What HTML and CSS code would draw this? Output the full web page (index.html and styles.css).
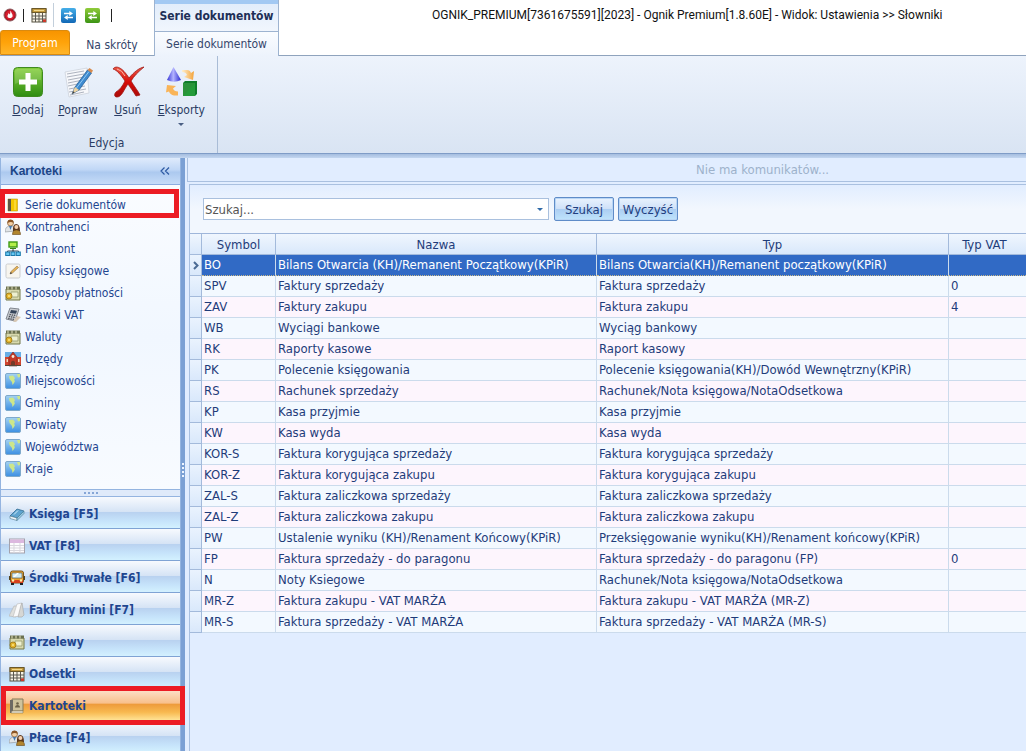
FILE: index.html
```html
<!DOCTYPE html>
<html lang="pl">
<head>
<meta charset="utf-8">
<title>OGNIK_PREMIUM</title>
<link rel="stylesheet" href="styles.css">
</head>
<body>
<svg class="defs" aria-hidden="true">
  <defs>
    <linearGradient id="g-green" x2="0" y2="1"><stop offset="0" stop-color="#86cf3c"/><stop offset="1" stop-color="#2f8d12"/></linearGradient>
    <linearGradient id="g-sky" x2="0" y2="1"><stop offset="0" stop-color="#a5d3f2"/><stop offset="1" stop-color="#3c8fe2"/></linearGradient>
    <linearGradient id="g-red" x2="0" y2="1"><stop offset="0" stop-color="#ec5a48"/><stop offset=".5" stop-color="#d80d08"/><stop offset="1" stop-color="#aa0a08"/></linearGradient>
    <linearGradient id="g-cone"><stop offset="0" stop-color="#3434d6"/><stop offset=".45" stop-color="#b4b4ff"/><stop offset="1" stop-color="#2828cf"/></linearGradient>
    <linearGradient id="g-orange"><stop offset="0" stop-color="#fff0cf"/><stop offset="1" stop-color="#f3a33a"/></linearGradient>
    <symbol id="i-flame" viewBox="0 0 16 16"><circle cx="8" cy="8" r="6" fill="#b4101e" stroke="#8a5a5e"/><circle cx="8" cy="8" r="4.6" fill="#d62030"/><path d="M8.500 3.600C9 6 11 7 10.600 9.300 10.300 11.600 6 11.700 5.500 9.400 5.300 8 6.500 7.500 6.300 6.300 7.500 6.600 7.600 7.400 7.700 7.600 8.600 6.400 8.200 4.600 8.500 3.600Z" fill="#fff"/></symbol>
    <symbol id="i-calendar" viewBox="0 0 16 16"><rect x="1" y="2" width="14" height="13" fill="#f8f4e6" stroke="#55503f"/><rect x="1" y="1.500" width="14" height="4" fill="#c39a3e" stroke="#6b5828"/><path d="M3 3.500h10" stroke="#f1d98b"/><path d="M4.500 6v9M8 6v9M11.500 6v9M1 9h14M1 12h14" stroke="#5a5851"/><path d="M12 12.500h3V15h-3z" fill="#d0382a"/></symbol>
    <symbol id="i-swap" viewBox="0 0 16 16"><path d="M2.500 4.500H9V2.500L13.500 5.500 9 8.500V6.500H2.500zM13.500 9.500H7V7.500L2.500 10.500 7 13.500V11.500h6.500z" fill="#fff"/></symbol>
    <symbol id="i-add" viewBox="0 0 32 32"><rect x="1.500" y="1.500" width="29" height="29" rx="4" fill="url(#g-green)" stroke="#3f8a20"/><path d="M3 5q0-2 3-2h20q3 0 3 2v9Q16 12 3 18z" fill="#fff" opacity=".15"/><path d="M13.500 7h5v6.500H25v5h-6.500V25h-5v-6.500H7v-5h6.500z" fill="#fff"/></symbol>
    <symbol id="i-edit" viewBox="0 0 32 32"><path d="M3 6 25 2l2 25-20 4z" fill="#f7f8fb" stroke="#c9ced8" stroke-width=".7"/><path d="M5 8l17-3M5 11l17-3M6 14l16-3M6 17l15-3M6 20l14-3M7 23l16-3M7 26l17-3M8 29l14-3" stroke="#8c94a4" stroke-width=".7"/><path d="M10 28l3-7L25.500 4l4 3L17 24z" fill="#3f8bd0" stroke="#1e568e" stroke-width=".7"/><path d="M14.500 22 27 5.500" stroke="#93caf3"/><path d="M25.500 4l2-2 3.500 2.500L29.500 7z" fill="#d68b50"/><path d="M10 28l3-7 4 3z" fill="#eed3a0"/><path d="M10 28l1.200-2.800 1.500 1.100z" fill="#333"/></symbol>
    <symbol id="i-delete" viewBox="0 0 32 32"><path d="M1 3C4-1 10 1 17 12 22 6 27 2 32 1 26 6 22 10 19 15 22 20 26 25 28 29L24 30C21 25 18 21 16 18 12 23 10 31 5 31 2 31 2 28 4 26 8 24 11 19 13 15 9 9 5 4 1 3Z" fill="url(#g-red)" stroke="#a01814" stroke-width=".8"/><path d="M5 3q5 1 8 7" stroke="#ffb7aa" fill="none"/></symbol>
    <symbol id="i-export" viewBox="0 0 32 32"><path d="M8.500 1 16 14q-7 3.500-14 0z" fill="url(#g-cone)"/><path d="M17 4h5q3 0 4 3l3-2-1 9-9-3 3-2q-1-3-5-3z" fill="url(#g-orange)"/><path d="M2 19l9 1-3 2.500q1 3 5 3v4H9q-4-1-5-4l-3 1z" fill="#f9b458"/><path d="M18 17l2-2h12v13l-2 2H18z" fill="#0f7d2a"/><path d="M18 17h12v13H18z" fill="#249b3a"/><path d="M18 17h12L18 30z" fill="#2f8f3a" opacity=".7"/></symbol>
    <symbol id="i-book" viewBox="0 0 16 16"><path d="M3 2h9.500v12H3z" fill="#f5c800" stroke="#c19a10" stroke-width=".6"/><path d="M3 2h3v12H3z" fill="#5d5747"/><path d="M10 3v10" stroke="#ffe96a"/></symbol>
    <symbol id="i-people" viewBox="0 0 16 16"><circle cx="5.500" cy="4" r="3" fill="#f3cfa4" stroke="#80552c" stroke-width=".7"/><path d="M2.500 4Q2.500 0 6 .8 9 1 8.500 4 6 2 2.500 4z" fill="#8a5425"/><path d="M0 13q0-6 5.500-6T10 12z" fill="#e1e5e8" stroke="#8b9095" stroke-width=".6"/><path d="M4 7l1.500 4L7 7z" fill="#4478b0"/><path d="M8 12q-.5-7 3.200-7T15 12z" fill="#5c371e"/><circle cx="11.400" cy="8" r="2" fill="#f5cfac"/><path d="M7.500 15.500q0-4.500 4-4.500t4 4.500z" fill="#b2852e" stroke="#644514" stroke-width=".6"/></symbol>
    <symbol id="i-tree" viewBox="0 0 16 16"><path d="M8 7v3M2.500 12v-2h11v2M8 9v3" stroke="#44515a" fill="none"/><rect x="4" y="1" width="8" height="5" fill="#b4ef4a" stroke="#3f9a15" stroke-width="1.400"/><path d="M5 7.500h6" stroke="#3b8415"/><rect x=".7" y="11" width="4" height="3.500" fill="#66c7f1" stroke="#1b79ab"/><rect x="6" y="11" width="4" height="3.500" fill="#66c7f1" stroke="#1b79ab"/><rect x="11.300" y="11" width="4" height="3.500" fill="#66c7f1" stroke="#1b79ab"/></symbol>
    <symbol id="i-note" viewBox="0 0 16 16"><rect x="1" y="1" width="14" height="14" rx="1.500" fill="#f7f5ef" stroke="#cbcdcf"/><path d="M5 11 6 8.500 12 3l1.500 1.500L7.500 10z" fill="#e7b354" stroke="#8e7350" stroke-width=".6"/><path d="M5 11l.8-2 1.200 1.200z" fill="#333"/></symbol>
    <symbol id="i-money" viewBox="0 0 16 16"><path d="M1 4h14v11H1z" fill="#d8d9ae" stroke="#737748"/><path d="M1 1.500h14v3H1z" fill="#6b7150"/><path d="M3 1.500v3M7 1.500v3M11 1.500v3" stroke="#e8e5c0"/><path d="M6 7h7v5H6z" fill="#eef0cf" stroke="#8a9062" stroke-width=".7"/><circle cx="4" cy="11" r="3" fill="#e3b52b" stroke="#9a7412" stroke-width=".8"/><circle cx="4" cy="11" r="1" fill="#fbe584"/></symbol>
    <symbol id="i-calc" viewBox="0 0 16 16"><path d="M5 1 14 2 10 14 1 12z" fill="#c9ccd1" stroke="#82878f"/><path d="M6 3l6 .8-1 3-6-.8z" fill="#36455a"/><path d="M4.500 7.500l6 1M3.800 9.500l6 1M3.200 11.500l6 1" stroke="#4a4e56" stroke-width="1.300" stroke-dasharray="1.400 .8"/><path d="M12 9l4 1-5 5-3-.5z" fill="#d8c7b4"/></symbol>
    <symbol id="i-school" viewBox="0 0 16 16"><path d="M0 1h16v14H0z" fill="#68aee6"/><path d="M0 6h16v8H0z" fill="#d0452f"/><path d="M4 6l4-5 4 5v9H4z" fill="#c23a28" stroke="#802518" stroke-width=".6"/><path d="M6 15v-4q2-2.500 4 0v4z" fill="#743a29"/><circle cx="8" cy="5.500" r="1.400" fill="#f5ead9"/><path d="M1.500 8h1.500v3H1.500zM13 8h1.500v3H13z" fill="#f1d5b7"/><path d="M0 14.500h16" stroke="#54483a"/></symbol>
    <symbol id="i-map" viewBox="0 0 16 16"><rect x=".5" y=".5" width="15" height="15" rx="1.500" fill="url(#g-sky)" stroke="#7fa9cb"/><path d="M4 3l4-.5L10 5l-1 2 1 1-1 2L7.500 12 7 9 4.500 6zM12 1h3v3l-2 .5z" fill="#cde78a"/></symbol>
    <symbol id="i-ledger" viewBox="0 0 16 16"><path d="M1 10 8 3l7 2-7 7z" fill="#5fa4cf" stroke="#286389" stroke-width=".7"/><path d="M1 10v2.500l7 2V12z" fill="#eff5f8" stroke="#4c788e" stroke-width=".6"/><path d="M8 12l7-7v2.500l-7 7z" fill="#9bcbe4" stroke="#447890" stroke-width=".6"/><path d="M5 8.500l4-4" stroke="#d4effc"/></symbol>
    <symbol id="i-form" viewBox="0 0 16 16"><rect x=".5" y="1" width="15" height="14" fill="#fdfcfe" stroke="#a4a2ac"/><path d="M1 1.500h14V5H1z" fill="#dcb8df"/><path d="M1 7.500h14M1 10h14M1 12.500h14M5 5v10M11 5v10" stroke="#d9d7dd"/></symbol>
    <symbol id="i-bus" viewBox="0 0 16 16"><rect x="1.500" y="1" width="13" height="12" rx="2" fill="#eba22c" stroke="#79561c"/><path d="M3 3h10v5H3z" fill="#d6eef0" stroke="#526367" stroke-width=".7"/><path d="M4 7l4-4h2L6 7z" fill="#fff"/><path d="M0 6h1.500v4H0zM14.500 6H16v4h-1.500z" fill="#55431d"/><path d="M2 10h12v3H2z" fill="#d6411d"/><circle cx="4" cy="10.500" r="1.200" fill="#fff4a9"/><circle cx="12" cy="10.500" r="1.200" fill="#fff4a9"/><path d="M2 13h3v2H2zM11 13h3v2h-3z" fill="#222"/></symbol>
    <symbol id="i-papers" viewBox="0 0 16 16"><path d="M0 14 5 4l4 0-2 11z" fill="#dfe0de" stroke="#b3b4b2" stroke-width=".6"/><path d="M4 15 8 2l5-1-2 13z" fill="#fafafa" stroke="#bbb" stroke-width=".6"/><path d="M9 15l3-12 1-2 2 12-2 2z" fill="#d6d7d5" stroke="#a5a5a5" stroke-width=".6"/></symbol>
    <symbol id="i-address" viewBox="0 0 16 16"><path d="M3 1h11v12H3z" fill="#cfc39c" stroke="#857b5b"/><path d="M1 2h3v13H1z" fill="#6d6a63"/><path d="M3 13h11v2H2z" fill="#f2edda" stroke="#857b5b" stroke-width=".6"/><circle cx="8.500" cy="5.500" r="1.300" fill="#6d6248"/><path d="M6 9.500q0-2.500 2.500-2.500T11 9.500z" fill="#6d6248"/></symbol>
  </defs>
</svg>
<div class="app">
  <header class="top">
    <div class="top-left">
      <div class="quick">
        <svg class="icon"><use href="#i-flame"/></svg>
        <span class="bar"></span>
        <button class="quick-btn" aria-label="Kalendarz"><svg class="icon"><use href="#i-calendar"/></svg></button>
        <span class="divider"></span>
        <button class="quick-btn swap swap-blue" aria-label="Zamień"><svg class="swap-icon"><use href="#i-swap"/></svg></button>
        <button class="quick-btn swap swap-green" aria-label="Odśwież"><svg class="swap-icon"><use href="#i-swap"/></svg></button>
        <span class="bar"></span>
      </div>
      <div class="tabs">
        <button class="tab-program">Program</button>
        <button class="tab">Na skróty</button>
      </div>
    </div>
    <div class="context">
      <div class="context-title">Serie dokumentów</div>
      <button class="context-tab">Serie dokumentów</button>
    </div>
    <div class="window-title">OGNIK_PREMIUM[7361675591][2023] - Ognik Premium[1.8.60E] - Widok: Ustawienia &gt;&gt; Słowniki</div>
  </header>

  <section class="ribbon">
    <div class="group">
      <div class="group-buttons">
        <button class="tool"><svg class="tool-icon"><use href="#i-add"/></svg><span><u>D</u>odaj</span></button>
        <button class="tool"><svg class="tool-icon"><use href="#i-edit"/></svg><span><u>P</u>opraw</span></button>
        <button class="tool"><svg class="tool-icon"><use href="#i-delete"/></svg><span><u>U</u>suń</span></button>
        <button class="tool"><svg class="tool-icon"><use href="#i-export"/></svg><span><u>E</u>ksporty</span><i class="caret"></i></button>
      </div>
      <div class="group-label">Edycja</div>
    </div>
  </section>

  <div class="work">
    <aside class="sidebar">
      <div class="side-head"><span>Kartoteki</span><button class="collapse" aria-label="Zwiń"><svg viewBox="0 0 10 8"><path d="M4.500 .5 1 4l3.500 3.500M9 .5 5.500 4 9 7.500" fill="none" stroke="#2d5aa3" stroke-width="1.200"/></svg></button></div>
      <nav class="side-list">
        <a class="side-item marked" href="#"><svg class="icon"><use href="#i-book"/></svg>Serie dokumentów</a>
        <a class="side-item" href="#"><svg class="icon"><use href="#i-people"/></svg>Kontrahenci</a>
        <a class="side-item" href="#"><svg class="icon"><use href="#i-tree"/></svg>Plan kont</a>
        <a class="side-item" href="#"><svg class="icon"><use href="#i-note"/></svg>Opisy księgowe</a>
        <a class="side-item" href="#"><svg class="icon"><use href="#i-money"/></svg>Sposoby płatności</a>
        <a class="side-item" href="#"><svg class="icon"><use href="#i-calc"/></svg>Stawki VAT</a>
        <a class="side-item" href="#"><svg class="icon"><use href="#i-money"/></svg>Waluty</a>
        <a class="side-item" href="#"><svg class="icon"><use href="#i-school"/></svg>Urzędy</a>
        <a class="side-item" href="#"><svg class="icon"><use href="#i-map"/></svg>Miejscowości</a>
        <a class="side-item" href="#"><svg class="icon"><use href="#i-map"/></svg>Gminy</a>
        <a class="side-item" href="#"><svg class="icon"><use href="#i-map"/></svg>Powiaty</a>
        <a class="side-item" href="#"><svg class="icon"><use href="#i-map"/></svg>Województwa</a>
        <a class="side-item" href="#"><svg class="icon"><use href="#i-map"/></svg>Kraje</a>
      </nav>
      <div class="side-grip"><i></i><i></i><i></i><i></i></div>
      <nav class="side-nav">
        <button class="nav-btn"><svg class="icon"><use href="#i-ledger"/></svg>Księga [F5]</button>
        <button class="nav-btn"><svg class="icon"><use href="#i-form"/></svg>VAT [F8]</button>
        <button class="nav-btn"><svg class="icon"><use href="#i-bus"/></svg>Środki Trwałe [F6]</button>
        <button class="nav-btn"><svg class="icon"><use href="#i-papers"/></svg>Faktury mini [F7]</button>
        <button class="nav-btn"><svg class="icon"><use href="#i-money"/></svg>Przelewy</button>
        <button class="nav-btn"><svg class="icon"><use href="#i-calendar"/></svg>Odsetki</button>
        <button class="nav-btn active"><svg class="icon"><use href="#i-address"/></svg>Kartoteki</button>
        <button class="nav-btn"><svg class="icon"><use href="#i-people"/></svg>Płace [F4]</button>
      </nav>
    </aside>
    <div class="splitter"><i></i><i></i><i></i><i></i></div>
    <main class="content">
      <div class="message">Nie ma komunikatów...</div>
      <div class="panel">
        <form class="search">
          <div class="combo">
            <input class="search-input" type="text" placeholder="Szukaj..." aria-label="Szukaj">
            <button class="combo-btn" type="button" aria-label="Rozwiń"><i class="caret"></i></button>
          </div>
          <button class="btn" type="button">Szukaj</button>
          <button class="btn" type="button">Wyczyść</button>
        </form>
        <table class="grid">
          <colgroup><col class="c-mark"><col class="c-symbol"><col class="c-name"><col class="c-type"><col></colgroup>
          <thead><tr><th></th><th>Symbol</th><th>Nazwa</th><th>Typ</th><th>Typ VAT</th></tr></thead>
          <tbody>
            <tr class="selected"><td><svg class="pointer" viewBox="0 0 6 9"><path d="M1 1l3.500 3.500L1 8" fill="none" stroke="#4a6a94" stroke-width="2"/></svg></td><td>BO</td><td>Bilans Otwarcia (KH)/Remanent Początkowy(KPiR)</td><td>Bilans Otwarcia(KH)/Remanent początkowy(KPiR)</td><td></td></tr>
            <tr><td></td><td>SPV</td><td>Faktury sprzedaży</td><td>Faktura sprzedaży</td><td>0</td></tr>
            <tr><td></td><td>ZAV</td><td>Faktury zakupu</td><td>Faktura zakupu</td><td>4</td></tr>
            <tr><td></td><td>WB</td><td>Wyciągi bankowe</td><td>Wyciąg bankowy</td><td></td></tr>
            <tr><td></td><td>RK</td><td>Raporty kasowe</td><td>Raport kasowy</td><td></td></tr>
            <tr><td></td><td>PK</td><td>Polecenie księgowania</td><td>Polecenie księgowania(KH)/Dowód Wewnętrzny(KPiR)</td><td></td></tr>
            <tr><td></td><td>RS</td><td>Rachunek sprzedaży</td><td>Rachunek/Nota księgowa/NotaOdsetkowa</td><td></td></tr>
            <tr><td></td><td>KP</td><td>Kasa przyjmie</td><td>Kasa przyjmie</td><td></td></tr>
            <tr><td></td><td>KW</td><td>Kasa wyda</td><td>Kasa wyda</td><td></td></tr>
            <tr><td></td><td>KOR-S</td><td>Faktura korygująca sprzedaży</td><td>Faktura korygująca sprzedaży</td><td></td></tr>
            <tr><td></td><td>KOR-Z</td><td>Faktura korygująca zakupu</td><td>Faktura korygująca zakupu</td><td></td></tr>
            <tr><td></td><td>ZAL-S</td><td>Faktura zaliczkowa sprzedaży</td><td>Faktura zaliczkowa sprzedaży</td><td></td></tr>
            <tr><td></td><td>ZAL-Z</td><td>Faktura zaliczkowa zakupu</td><td>Faktura zaliczkowa zakupu</td><td></td></tr>
            <tr><td></td><td>PW</td><td>Ustalenie wyniku (KH)/Renament Końcowy(KPiR)</td><td>Przeksięgowanie wyniku(KH)/Renament końcowy(KPiR)</td><td></td></tr>
            <tr><td></td><td>FP</td><td>Faktura sprzedaży - do paragonu</td><td>Faktura sprzedaży - do paragonu (FP)</td><td>0</td></tr>
            <tr><td></td><td>N</td><td>Noty Ksiegowe</td><td>Rachunek/Nota księgowa/NotaOdsetkowa</td><td></td></tr>
            <tr><td></td><td>MR-Z</td><td>Faktura zakupu - VAT MARŻA</td><td>Faktura zakupu - VAT MARŻA (MR-Z)</td><td></td></tr>
            <tr><td></td><td>MR-S</td><td>Faktura sprzedaży - VAT MARŻA</td><td>Faktura sprzedaży - VAT MARŻA (MR-S)</td><td></td></tr>
          </tbody>
        </table>
      </div>
    </main>
  </div>
</div>
</body>
</html>
```
FILE: styles.css
```css
* { box-sizing: border-box; }
body {
  margin: 0;
  font-family: "DejaVu Sans Condensed", "DejaVu Sans", sans-serif;
  font-size: 12px;
  color: #1f3c7a;
  background: #e1edff;
}
button { margin: 0; padding: 0; border: 0; background: none; font: inherit; color: inherit; }
.defs { position: absolute; width: 0; height: 0; }
.icon { width: 16px; height: 16px; flex: none; }
.app { display: flex; flex-direction: column; height: 100vh; overflow: hidden; }

/* title bar and tabs */
.top { display: flex; flex: none; height: 56px; background: #fff; }
.top-left { width: 154px; display: flex; flex-direction: column; border-bottom: 1px solid #8fa3bd; }
.quick { display: flex; align-items: center; height: 30px; padding-left: 2px; }
.quick-btn { display: flex; }
.bar { width: 1px; height: 13px; margin: 0 7px 0 5px; background: #222; }
.divider { width: 1px; height: 24px; margin: 0 7px 0 6px; background: #c3cfdb; }
.swap { border-radius: 2px; margin-right: 9px; width: 15px; height: 15px; align-items: center; justify-content: center; }
.swap-green { margin-right: 6px; }
.swap-icon { width: 13px; height: 13px; }
.swap-blue { background: linear-gradient(#45aee8, #1268b6); }
.swap-green { background: linear-gradient(#8fcb3a, #3c9414); }
.tabs { display: flex; flex: 1; }
.tab-program {
  width: 70px; color: #fff; border: 1px solid #d98a10; border-radius: 3px 3px 0 0;
  background: linear-gradient(#f79400, #ffa30a 50%, #ffb52a);
}
.tab { flex: 1; color: #35466b; padding-top: 4px; }
.context {
  width: 125px; display: flex; flex-direction: column;
  border: solid #9db3d0; border-width: 0 1px;
}
.context-title {
  height: 32px; border-top: 4px solid #a3c9f3; border-bottom: 1px solid #9db3d0;
  background: linear-gradient(#e2edfb, #f1f6fd);
  line-height: 24px; text-align: center; font-weight: bold; color: #1e2f57;
}
.context-tab { flex: 1; background: linear-gradient(#fafcff, #edf3fc); color: #35466b; border-radius: 3px 3px 0 0; }
.window-title {
  flex: 1; padding-left: 153px; line-height: 30px; color: #111; font-family: Roboto, "Open Sans", sans-serif;
  white-space: nowrap; overflow: hidden; border-bottom: 1px solid #8fa3bd;
}

/* ribbon */
.ribbon {
  flex: none; display: flex; height: 98px; color: #2b3c63;
  background: linear-gradient(#edf3fc, #d9e4f3); border-bottom: 1px solid #7f9cc7;
}
.group { display: flex; flex-direction: column; width: 218px; border-right: 1px solid #a9bcd6; padding: 10px 12px 0 8px; }
.group-buttons { display: flex; justify-content: space-between; height: 67px; }
.tool { display: flex; flex-direction: column; align-items: center; justify-content: flex-start; line-height: 16px; min-width: 40px; }
.tool-icon { width: 32px; height: 32px; margin-bottom: 4px; }
.tool .caret { margin-top: 5px; }
.group-label { text-align: center; line-height: 20px; }
.caret { border: solid transparent; border-width: 3px 3px 0; border-top-color: #4a5f83; }

/* work area */
.work {
  flex: 1; min-height: 0; display: flex; padding-top: 4px;
  background: linear-gradient(#a5bddf, #c3d6f0 4px, #d5e4f8 5px);
}
.sidebar { width: 181px; flex: none; display: flex; flex-direction: column; border: solid #94b4e0; border-width: 0 1px; background: #f3f8ff; }
.side-head {
  flex: none; display: flex; justify-content: space-between; align-items: center; height: 27px; padding: 0 10px 0 9px;
  background: linear-gradient(#dfebfc, #c0d7f6 45%, #acc9ef 55%, #c6dcf8); border-bottom: 1px solid #8cade0;
  font-weight: bold; font-family: "Liberation Sans", Arial, sans-serif; color: #1c4587;
}
.collapse svg { display: block; width: 10px; height: 8px; }
.side-list { flex: none; display: flex; flex-direction: column; padding: 9px 0; background: linear-gradient(#fafcff, #f1f7ff 50%, #f8fbff); }
.side-item { display: flex; align-items: center; gap: 4px; height: 22px; padding-left: 4px; color: #1f4690; text-decoration: none; position: relative; }
.marked::after { content: ""; position: absolute; inset: -5px 1px -2px -1px; border: 5px solid #ec1c24; }
.side-grip { flex: none; display: flex; gap: 2px; justify-content: center; align-items: center; height: 8px; background: #dfeafa; border: solid #94b4e0; border-width: 1px 0; }
.side-grip i { width: 2px; height: 2px; background: #86a6d6; }
.side-nav { display: flex; flex-direction: column; flex: none; }
.nav-btn {
  display: flex; align-items: center; gap: 4px; height: 32px; padding: 2px 0 0 8px; position: relative;
  font-weight: bold; color: #1f4690; border-bottom: 1px solid #7fa3d4;
  background: linear-gradient(#f7fafe, #d5e3f5 48%, #b9d2f0 50%, #c5e2fa 75%, #d3f1ff);
}
.active { background: linear-gradient(#fde3cf, #f8c08c 45%, #ee9c3c 50%, #f8b950 75%, #ffe294); }
.active::after { content: ""; position: absolute; inset: -3px -5px -5px 0; border: 5px solid #ec1c24; z-index: 1; }
.splitter { flex: none; width: 4px; background: #7ba0d4; display: flex; flex-direction: column; gap: 2px; padding-top: 305px; align-items: center; }
.splitter i { width: 2px; height: 2px; background: #eef5ff; }

.content { flex: 1; min-width: 0; display: flex; flex-direction: column; padding-left: 2px; background: #e1edff; font-size: 13px; }
.message {
  flex: none; height: 24px; line-height: 24px; padding-left: 508px; color: #9db2cb;
  border: solid #a9c0e0; border-width: 0 0 1px 1px; white-space: nowrap; overflow: hidden;
}
.panel { flex: 1; min-height: 0; margin: 2px 0 0 2px; border: solid #a9c0e0; border-width: 1px 0 0 1px; }
.search {
  display: flex; align-items: center; gap: 5px; height: 49px; padding: 0 0 0 13px;
  background: linear-gradient(#e1edff, #f2f7fe 50%); border-bottom: 1px solid #9fb6da;
}
.combo { display: flex; width: 346px; height: 22px; border: 1px solid #a9c0de; background: #fff; }
.search-input { flex: 1; min-width: 0; border: 0; padding: 0 1px; background: none; font: inherit; color: #555; outline: 0; }
.search-input::placeholder { color: #555; opacity: 1; }
.combo-btn { width: 17px; display: flex; align-items: center; justify-content: center; }
.combo-btn .caret { border-top-color: #2f6aa8; }
.btn {
  width: 60px; height: 24px; border: 1px solid #5f8cc8; border-radius: 2px; color: #1f3f80;
  background: linear-gradient(#eaf3fe, #cfe1f8 48%, #abcdf2 50%, #bfe4fc);
  box-shadow: inset 0 0 0 1px #b9d6f5; white-space: nowrap;
}
.btn + .btn { margin-left: -1px; }

/* data grid */
.grid { width: 100%; border-collapse: separate; border-spacing: 0; table-layout: fixed; }
.c-mark { width: 12px; }
.c-symbol { width: 74px; }
.c-name { width: 321px; }
.c-type { width: 352px; }
.grid th { height: 21px; padding: 0; font-weight: normal; background: linear-gradient(#f0f6fe, #d9e8fb); border: solid #a3badb; border-width: 0 1px 1px 0; }
.grid td { height: 21px; padding: 0 2px; line-height: 16px; white-space: nowrap; overflow: hidden; border: solid #cbdbec; border-width: 0 1px 1px 0; background: #fdf5fd; }
.grid th:last-child, .grid td:last-child { border-right: 0; }
.grid th:last-child { padding-right: 6px; }
.grid tr:nth-child(even) td { background: #f3f9ff; }
.grid tbody td:first-child { padding: 0; background: linear-gradient(#eaf3fe, #d9e8fb); border-color: #a3badb; }
.grid .selected td:not(:first-child) { background: #316ac5; color: #fff; border-bottom: 1px dotted #c9b98a; }
.pointer { display: block; width: 6px; height: 9px; margin: 0 auto; }
```
